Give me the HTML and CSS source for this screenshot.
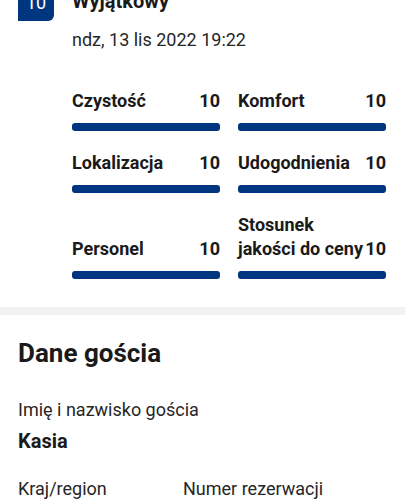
FILE: index.html
```html
<!DOCTYPE html>
<html lang="pl">
<head>
  <meta charset="UTF-8">
  <meta name="viewport" content="width=device-width, initial-scale=1.0">
  <title>Opinia</title>
  <link rel="stylesheet" href="styles.css">
</head>
<body>
  <div class="review">
    <div class="review-head">
      <div class="badge">10</div>
      <div class="head-text">
        <div class="title">Wyjątkowy</div>
        <div class="date">ndz, 13 lis 2022 19:22</div>
      </div>
    </div>
    <div class="scores">
      <div class="score">
        <div class="score-row"><span>Czystość</span><span>10</span></div>
        <div class="bar"></div>
      </div>
      <div class="score">
        <div class="score-row"><span>Komfort</span><span>10</span></div>
        <div class="bar"></div>
      </div>
      <div class="score">
        <div class="score-row"><span>Lokalizacja</span><span>10</span></div>
        <div class="bar"></div>
      </div>
      <div class="score">
        <div class="score-row"><span>Udogodnienia</span><span>10</span></div>
        <div class="bar"></div>
      </div>
      <div class="score">
        <div class="score-row"><span>Personel</span><span>10</span></div>
        <div class="bar"></div>
      </div>
      <div class="score">
        <div class="score-row"><span>Stosunek<br>jakości do ceny</span><span>10</span></div>
        <div class="bar"></div>
      </div>
    </div>
  </div>
  <div class="divider"></div>
  <div class="guest">
    <h2 class="guest-title">Dane gościa</h2>
    <div class="field-label">Imię i nazwisko gościa</div>
    <div class="field-value">Kasia</div>
    <div class="field-pair">
      <div class="field-label">Kraj/region</div>
      <div class="field-label">Numer rezerwacji</div>
    </div>
  </div>
</body>
</html>
```

FILE: styles.css
```css
html, body {
  margin: 0;
  background: #fff;
  font-family: Roboto, "Liberation Sans", sans-serif;
  color: #1a1a1a;
}
.review-head {
  display: flex;
  gap: 18px;
  padding: 0 18px;
  margin-top: -15px;
}
.badge {
  width: 36px;
  height: 36px;
  flex-shrink: 0;
  background: #003580;
  color: #fff;
  border-radius: 6px 6px 6px 0;
  font-size: 18px;
  line-height: 36px;
  text-align: center;
}
.head-text {
  padding-top: 2px;
}
.title {
  font-size: 20px;
  font-weight: 700;
  line-height: 28px;
}
.date {
  margin-top: 13px;
  font-size: 18px;
  line-height: 24px;
  color: #262626;
}
.scores {
  display: grid;
  grid-template-columns: 148px 148px;
  column-gap: 18px;
  row-gap: 20px;
  margin: 37px 0 0 72px;
}
.score {
  display: flex;
  flex-direction: column;
}
.score-row {
  flex: 1;
  display: flex;
  justify-content: space-between;
  align-items: flex-end;
  font-size: 18px;
  font-weight: 700;
  line-height: 24px;
}
.bar {
  height: 8px;
  margin-top: 10px;
  background: #003580;
  border-radius: 3px;
}
.divider {
  height: 8px;
  margin-top: 28px;
  background: #f2f2f2;
}
.guest {
  padding: 22px 18px 0;
}
.guest-title {
  margin: 0 0 29px;
  font-size: 26px;
  font-weight: 700;
  line-height: 32px;
}
.field-label {
  font-size: 18px;
  line-height: 24px;
  color: #262626;
}
.field-value {
  margin-top: 5px;
  font-size: 20px;
  font-weight: 700;
  line-height: 28px;
}
.field-pair {
  display: grid;
  grid-template-columns: 165px 1fr;
  margin-top: 22px;
}
```
